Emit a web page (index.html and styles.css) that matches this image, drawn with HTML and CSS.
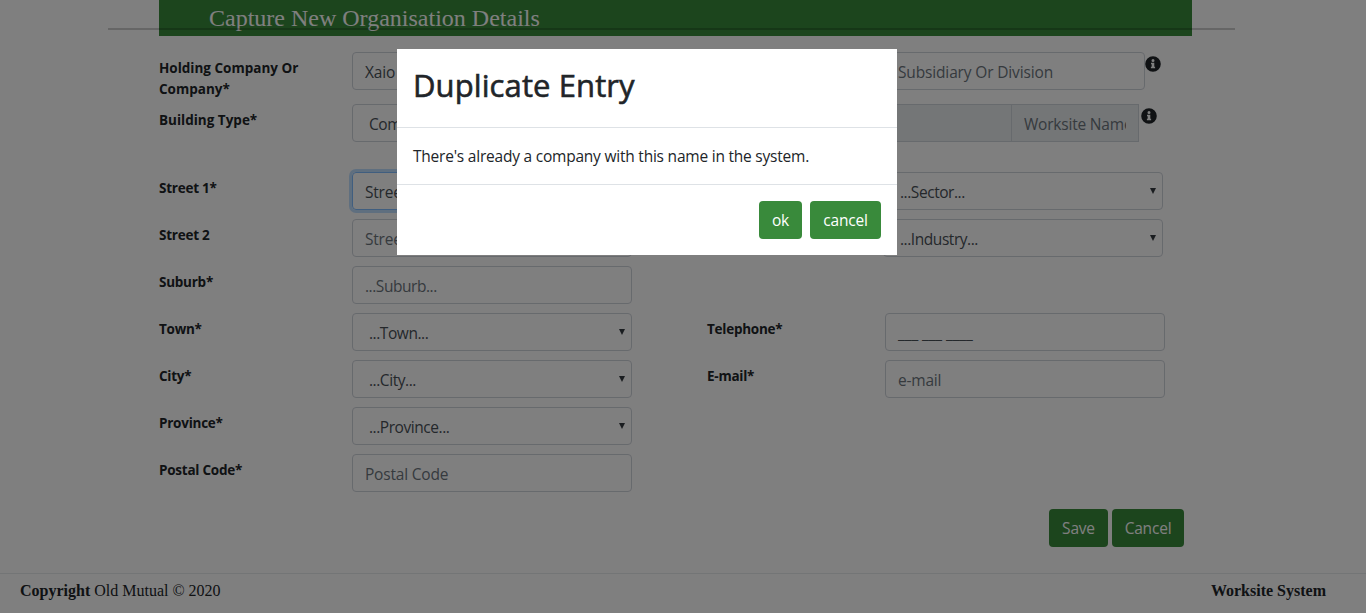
FILE: index.html
```html
<!DOCTYPE html>
<html lang="en">
<head>
<meta charset="utf-8">
<title>Worksite System</title>
<link rel="stylesheet" href="styles.css">
</head>
<body>
<svg class="defs" width="0" height="0"><symbol id="info" viewBox="0 0 16 16"><path fill-rule="evenodd" d="M8 .2a7.800 7.800 0 1 0 0 15.600A7.800 7.800 0 0 0 8 .2ZM8 3a1.500 1.500 0 1 1 0 3 1.500 1.500 0 0 1 0-3ZM6 6.800h3.300v4h.8v1.500H5.900v-1.500h.8V8.300H6Z"/></symbol>
<symbol id="arrow" viewBox="0 0 6 6"><path d="M0 0h6L3 6Z"/></symbol></svg>
<main class="page">
  <header class="title-bar"><h2 class="title">Capture New Organisation Details</h2><hr class="rule"></header>
  <form class="form">
    <div class="row row-company">
      <label class="label label-wide">Holding Company Or Company*</label><div class="field">Xaio</div>
      <span></span><div class="with-info"><div class="field hint subsidiary">Subsidiary Or Division</div><svg class="info"><use href="#info"/></svg></div>
    </div>
    <div class="row row-building">
      <label class="label label-wide">Building Type*</label><div class="field select">Commercial<svg class="arrow"><use href="#arrow"/></svg></div>
      <span></span><div class="with-info"><div class="group"><div class="addon"></div><div class="addon worksite"><span class="clip">Worksite Name</span></div></div><svg class="info"><use href="#info"/></svg></div>
    </div>
    <div class="row">
      <label class="label">Street 1*</label><div class="field focused">Street 1</div>
      <label class="label"></label><div class="field select shifted">...Sector...<svg class="arrow"><use href="#arrow"/></svg></div>
    </div>
    <div class="row">
      <label class="label">Street 2</label><div class="field hint">Street 2</div>
      <label class="label"></label><div class="field select shifted">...Industry...<svg class="arrow"><use href="#arrow"/></svg></div>
    </div>
    <div class="row"><label class="label">Suburb*</label><div class="field hint suburb">...Suburb...</div></div>
    <div class="row">
      <label class="label">Town*</label><div class="field select">...Town...<svg class="arrow"><use href="#arrow"/></svg></div>
      <label class="label">Telephone*</label><div class="field phone">___ ___ ____</div>
    </div>
    <div class="row">
      <label class="label">City*</label><div class="field select">...City...<svg class="arrow"><use href="#arrow"/></svg></div>
      <label class="label">E-mail*</label><div class="field hint">e-mail</div>
    </div>
    <div class="row"><label class="label">Province*</label><div class="field select">...Province...<svg class="arrow"><use href="#arrow"/></svg></div></div>
    <div class="row"><label class="label">Postal Code*</label><div class="field hint">Postal Code</div></div>
    <div class="actions"><button type="button" class="btn save">Save</button><button type="button" class="btn cancel">Cancel</button></div>
  </form>
  <footer class="footer"><span><b class="copy">Copyright</b> Old Mutual © 2020</span><b>Worksite System</b></footer>
</main>
<div class="overlay">
  <section class="modal">
    <div class="modal-head"><h1 class="modal-title">Duplicate Entry</h1></div>
    <div class="modal-body"><span class="message">There's already a company with this name in the system.</span></div>
    <div class="modal-foot"><button type="button" class="btn ok">ok</button><button type="button" class="btn dismiss">cancel</button></div>
  </section>
</div>
</body>
</html>
```
FILE: styles.css
```css
* { box-sizing: border-box; }
body { margin: 0; background: #fff; color: #212529; font: 15.5px/24px "Open Sans", "Noto Sans", sans-serif; overflow: hidden; }
.defs { position: absolute; }
.page { height: 613px; display: flex; flex-direction: column; }
.title-bar { position: relative; height: 36px; margin: 0 174px 0 159px; background: #398a3b; padding-left: 50px; flex: none; }
.title { margin: 0; padding-top: 4px; color: #fff; font: 24px/28px "Liberation Serif", serif; }
.rule { position: absolute; left: -51px; top: 28px; width: 1127px; height: 2px; margin: 0; border: 0; background: rgba(0, 0, 0, .2); }
.form { flex: 1; padding: 16px 174px 0 159px; }
.row { display: grid; grid-template-columns: 193px 355px 178px 280px; height: 38px; margin-bottom: 9px; }
.row-company { margin-bottom: 14px; }
.row-building { margin-bottom: 30px; }
.label { font-size: 13.5px; line-height: 21px; font-weight: 700; padding-top: 6px; width: 165px; letter-spacing: -.25px; }
.label-wide { letter-spacing: 0; }
.field { position: relative; width: 280px; height: 38px; border: 1px solid #ced4da; border-radius: 4px; padding: 7px 12px 5px; color: #495057; white-space: nowrap; letter-spacing: -.2px; }
.hint { color: #6c757d; }
.select { padding-left: 16px; letter-spacing: -.45px; }
.suburb { letter-spacing: -.45px; }
.phone { letter-spacing: -.1px; }
.shifted { margin-left: -2px; }
.focused { border-color: #80bdff; box-shadow: 0 0 0 3px rgba(0, 123, 255, .25); }
.arrow { position: absolute; right: 6px; top: 15px; width: 6px; height: 6px; fill: #343a40; }
.with-info { display: flex; }
.info { width: 16px; height: 16px; margin: 4px 0 0; flex: none; fill: #212529; }
.subsidiary { width: 260px; letter-spacing: -.15px; }
.group { display: flex; width: 254px; }
.addon { width: 127px; height: 38px; border: 1px solid #ced4da; border-right: 0; background: #e9ecef; }
.worksite { width: 128px; padding: 7px 12px 5px; border-right: 1px solid #ced4da; color: #6c757d; }
.group + .info { margin-left: 2px; }
.clip { display: block; width: 102px; overflow: hidden; white-space: nowrap; letter-spacing: -.2px; }
.actions { display: flex; justify-content: flex-end; gap: 4px; padding: 8px 8px 0 0; }
.btn { height: 38px; border: 0; border-radius: 4px; background: #398a3b; color: #fff; font: inherit; padding: 0; letter-spacing: -.2px; }
.save { width: 59px; }
.cancel { width: 72px; }
.footer { height: 40px; flex: none; display: flex; justify-content: space-between; border-top: 1px solid #e7eaec; padding: 5px 40px 0 20px; font: 16px/24px "Liberation Serif", serif; }
.overlay { position: absolute; inset: 0; background: rgba(0, 0, 0, .5); padding-top: 49px; }
.modal { width: 500px; height: 206px; margin-left: 397px; background: #fff; }
.modal-head { height: 79px; padding: 12px 16px; border-bottom: 1px solid #dee2e6; }
.modal-title { margin: 0; font-size: 31px; line-height: 48px; font-weight: 500; letter-spacing: .1px; -webkit-text-stroke: .6px #212529; }
.modal-body { height: 57px; padding: 16px; border-bottom: 1px solid #dee2e6; white-space: nowrap; }
.message { letter-spacing: -.22px; }
.modal-foot { display: flex; justify-content: flex-end; gap: 8px; padding: 16px; }
.ok { width: 43px; }
.dismiss { width: 71px; }
```
